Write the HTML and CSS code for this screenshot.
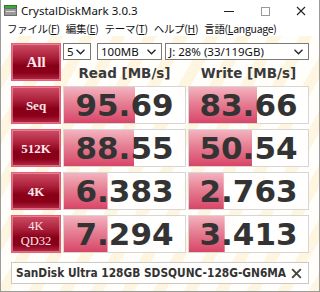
FILE: index.html
```html
<!DOCTYPE html>
<html>
<head>
<meta charset="utf-8">
<link rel="stylesheet" href="styles.css">
</head>
<body>
<div class="window">
  <div class="titlebar">
    <svg class="appicon" width="13" height="12" viewBox="0 0 13 12">
      <rect x="0.5" y="0.5" width="12" height="3" fill="#3aa83a" stroke="#2a7a2a"/>
      <rect x="0.5" y="3.5" width="12" height="7" fill="#9a9a9a" stroke="#6a6a6a"/>
      <rect x="2" y="6" width="9" height="1" fill="#dcdcdc"/>
    </svg>
    <span class="title">CrystalDiskMark 3.0.3</span>
    <div class="controls">
      <svg width="10" height="10" viewBox="0 0 10 10"><line x1="0" y1="5.5" x2="10" y2="5.5" stroke="#222" stroke-width="1"/></svg>
      <svg width="10" height="10" viewBox="0 0 10 10"><rect x="1.5" y="1.5" width="8" height="8" fill="none" stroke="#999" stroke-width="1"/></svg>
      <svg width="10" height="10" viewBox="0 0 10 10"><path d="M1 1 L9 9 M9 1 L1 9" stroke="#222" stroke-width="1.1"/></svg>
    </div>
  </div>
  <div class="menubar">
    <span>ファイル(<u>F</u>)</span>
    <span>編集(<u>E</u>)</span>
    <span>テーマ(<u>T</u>)</span>
    <span>ヘルプ(<u>H</u>)</span>
    <span>言語(<u>L</u>anguage)</span>
  </div>
  <div class="client">
    <div class="grid">
      <div class="label all">All</div>
      <div class="combos">
        <div class="combo c1"><span>5</span><svg width="9" height="6" viewBox="0 0 9 6"><path d="M0.5 0.8 L4.5 4.8 L8.5 0.8" fill="none" stroke="#222" stroke-width="1.3"/></svg></div>
        <div class="combo c2"><span>100MB</span><svg width="9" height="6" viewBox="0 0 9 6"><path d="M0.5 0.8 L4.5 4.8 L8.5 0.8" fill="none" stroke="#222" stroke-width="1.3"/></svg></div>
        <div class="combo c3"><span>J: 28% (33/119GB)</span><svg width="9" height="6" viewBox="0 0 9 6"><path d="M0.5 0.8 L4.5 4.8 L8.5 0.8" fill="none" stroke="#222" stroke-width="1.3"/></svg></div>
      </div>
      <div class="head">Read [MB/s]</div>
      <div class="head">Write [MB/s]</div>

      <div class="label">Seq</div>
      <div class="cell" style="--w:59%">95.69</div>
      <div class="cell" style="--w:57.5%">83.66</div>

      <div class="label">512K</div>
      <div class="cell" style="--w:58.2%">88.55</div>
      <div class="cell" style="--w:53.3%">50.54</div>

      <div class="label">4K</div>
      <div class="cell" style="--w:36%">6.383</div>
      <div class="cell" style="--w:29.2%">2.763</div>

      <div class="label two">4K<br>QD32</div>
      <div class="cell" style="--w:36%">7.294</div>
      <div class="cell" style="--w:30%">3.413</div>
    </div>
    <div class="comment">
      <span>SanDisk Ultra 128GB SDSQUNC-128G-GN6MA</span>
      <svg width="11" height="11" viewBox="0 0 11 11"><path d="M1.2 1.2 L9.8 9.8 M9.8 1.2 L1.2 9.8" stroke="#444" stroke-width="1.9"/></svg>
    </div>
  </div>
</div>
</body>
</html>
```
FILE: styles.css
```css
* { box-sizing: border-box; }
html, body { margin: 0; padding: 0; background: #fff; }
.window {
  width: 320px;
  height: 292px;
  border: 1px solid #9b9b9b;
  border-top: none;
  display: flex;
  flex-direction: column;
  background: #fff;
  overflow: hidden;
}
.titlebar {
  height: 21px;
  flex: none;
  display: flex;
  align-items: center;
  padding-left: 3px;
  font-family: "Noto Sans", sans-serif;
  font-size: 11.5px;
  color: #111;
}
.appicon { margin-top: 1px; }
.title { margin-left: 4px; white-space: nowrap; }
.controls {
  margin-left: auto;
  display: flex;
  gap: 26px;
  padding-right: 13px;
  align-items: center;
}
.menubar {
  height: 15px;
  flex: none;
  display: flex;
  align-items: center;
  gap: 6px;
  padding-left: 6px;
  font-family: "Noto Sans CJK JP", sans-serif;
  font-size: 10.5px;
  letter-spacing: -0.3px;
  line-height: 13px;
  color: #111;
  white-space: nowrap;
}
.menubar span { flex: none; }
.menubar u { text-decoration-thickness: 1px; text-underline-offset: 1px; }
.client {
  flex: 1;
  padding: 7px 0 0 10px;
  background:
    repeating-linear-gradient(120deg, rgba(255,255,255,0) 0 16px, rgba(253,222,150,0.26) 16px 27px),
    #fffefa;
}
.grid {
  display: grid;
  grid-template-columns: 50px 123px 121px;
  grid-template-rows: 17px 16px 38px 38px 38px 38px;
  column-gap: 2px;
  row-gap: 5px;
}
.label {
  display: flex;
  align-items: center;
  justify-content: center;
  text-align: center;
  border: 1px solid #e2607a;
  box-shadow: inset 0 0 0 1px rgba(255,170,185,0.55);
  background: linear-gradient(#cf4e66 0%, #ad223c 35%, #880017 60%, #8a0019 80%, #b52a46 100%);
  color: #fde6ec;
  font-family: "Liberation Serif", serif;
  font-weight: bold;
  font-size: 13px;
  line-height: 15px;
}
.label.all { grid-row: 1 / 3; font-size: 15px; }
.label.two { font-weight: normal; font-size: 12.5px; }
.combos {
  grid-column: 2 / 4;
  display: flex;
}
.combo {
  height: 17px;
  border: 1px solid #7a7a7a;
  background: #fff;
  display: flex;
  align-items: center;
  padding: 0 5px 0 3px;
  font-family: "Noto Sans", sans-serif;
  font-size: 11.5px;
  color: #111;
  justify-content: space-between;
  white-space: nowrap;
}
.c1 { width: 28px; margin-right: 6px; }
.c2 { width: 65px; margin-right: 3px; }
.c3 { flex: 1; }
.head {
  display: flex;
  align-items: center;
  justify-content: center;
  font-family: "DejaVu Sans", sans-serif;
  font-weight: bold;
  font-size: 13.5px;
  color: #3a3a3a;
  white-space: nowrap;
}
.cell {
  display: flex;
  align-items: center;
  justify-content: center;
  border: 1px solid #d6d6d6;
  background: linear-gradient(#f4b3bf 0%, #e57f93 45%, #dc5574 85%, #d94466 100%) no-repeat, rgba(255,255,255,0.9);
  background-size: var(--w) 100%, 100% 100%;
  font-family: "DejaVu Sans", sans-serif;
  font-weight: bold;
  font-size: 31px;
  color: #333;
}
.comment {
  margin-top: 9px;
  width: 298px;
  height: 22px;
  border: 1px solid #c9c9c9;
  background: rgba(255,255,255,0.85);
  display: flex;
  align-items: center;
  justify-content: space-between;
  padding: 0 6px 0 4px;
  font-family: "DejaVu Sans Condensed", "DejaVu Sans", sans-serif;
  font-weight: bold;
  font-size: 11.8px;
  color: #333;
  white-space: nowrap;
}
```
